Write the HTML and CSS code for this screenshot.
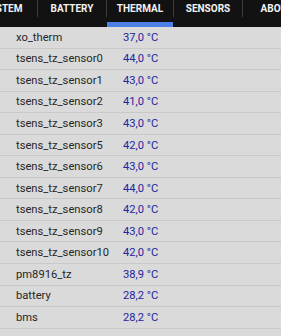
FILE: index.html
```html
<!DOCTYPE html>
<html lang="en">
<head>
    <meta charset="UTF-8">
    <meta name="viewport" content="width=device-width, initial-scale=1.0">
    <title>Thermal</title>
    <link rel="stylesheet" href="styles.css">
</head>
<body>

    <!-- Tab strip, scrolled so THERMAL is in view -->
    <nav class="tabs">
        <div class="tab">SYSTEM</div>
        <span class="sep"></span>
        <div class="tab">BATTERY</div>
        <span class="sep"></span>
        <div class="tab active">THERMAL</div>
        <span class="sep"></span>
        <div class="tab">SENSORS</div>
        <span class="sep"></span>
        <div class="tab">ABOUT</div>
    </nav>

    <ul class="zones">
        <li class="zone"><span class="name">xo_therm</span><span class="temp">37,0 °C</span></li>
        <li class="zone"><span class="name">tsens_tz_sensor0</span><span class="temp">44,0 °C</span></li>
        <li class="zone"><span class="name">tsens_tz_sensor1</span><span class="temp">43,0 °C</span></li>
        <li class="zone"><span class="name">tsens_tz_sensor2</span><span class="temp">41,0 °C</span></li>
        <li class="zone"><span class="name">tsens_tz_sensor3</span><span class="temp">43,0 °C</span></li>
        <li class="zone"><span class="name">tsens_tz_sensor5</span><span class="temp">42,0 °C</span></li>
        <li class="zone"><span class="name">tsens_tz_sensor6</span><span class="temp">43,0 °C</span></li>
        <li class="zone"><span class="name">tsens_tz_sensor7</span><span class="temp">44,0 °C</span></li>
        <li class="zone"><span class="name">tsens_tz_sensor8</span><span class="temp">42,0 °C</span></li>
        <li class="zone"><span class="name">tsens_tz_sensor9</span><span class="temp">43,0 °C</span></li>
        <li class="zone"><span class="name">tsens_tz_sensor10</span><span class="temp">42,0 °C</span></li>
        <li class="zone"><span class="name">pm8916_tz</span><span class="temp">38,9 °C</span></li>
        <li class="zone"><span class="name">battery</span><span class="temp">28,2 °C</span></li>
        <li class="zone"><span class="name">bms</span><span class="temp">28,2 °C</span></li>
    </ul>

</body>
</html>
```

FILE: styles.css
```css
/* Global reset */
* {
    margin: 0;
    padding: 0;
    box-sizing: border-box;
}

body {
    font-family: Roboto, 'Noto Sans', sans-serif;
    background-color: #dadada;
    overflow: hidden;
}

/* Tab strip */
.tabs {
    display: flex;
    align-items: flex-start;
    height: 27px;
    background-color: #121212;
    margin-left: -31px;
    white-space: nowrap;
}

.tab {
    flex: 0 0 68px;
    height: 27px;
    padding-top: 3px;
    text-align: center;
    font-size: 10px;
    font-weight: bold;
    color: #f2f2f2;
    border-bottom: 5px solid transparent;
}

.tab.active {
    flex-basis: 66px;
    border-bottom-color: #4d7fe6;
}

.sep {
    flex: 0 0 1px;
    height: 17px;
    background-color: #3a3a3a;
}

/* Thermal zone list */
.zones {
    list-style: none;
}

.zone {
    display: flex;
    align-items: center;
    height: 21.55px;
    padding-left: 16px;
    font-size: 11.2px;
    border-bottom: 1px solid #c9c9c9;
}

.zone .name {
    width: 107px;
    color: #262626;
}

.zone .temp {
    color: #24249e;
}
```
